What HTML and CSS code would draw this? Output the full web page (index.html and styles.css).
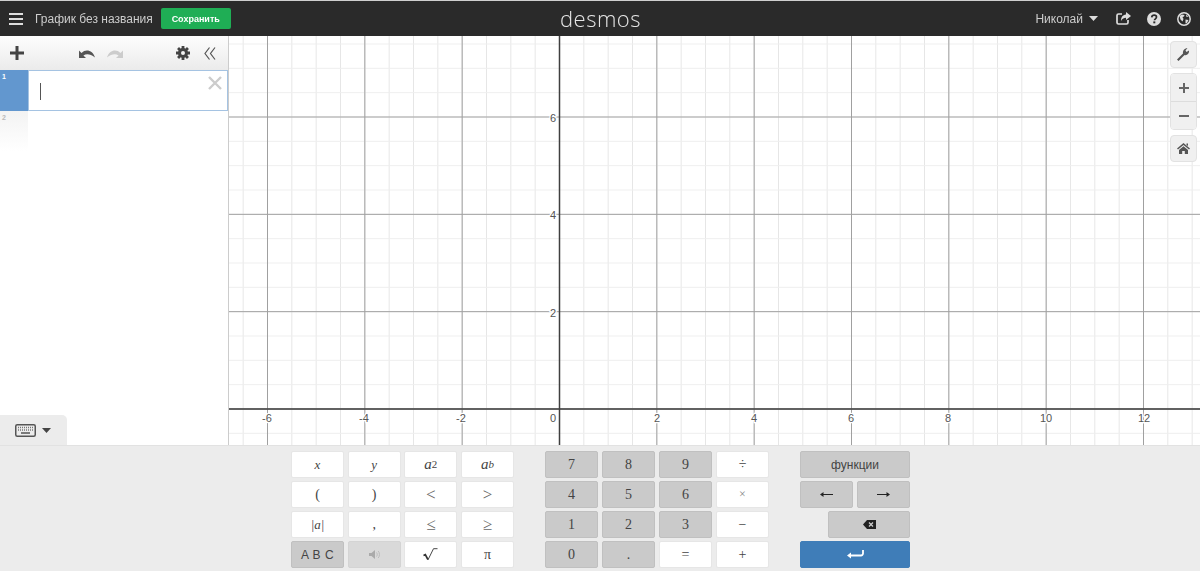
FILE: index.html
```html
<!DOCTYPE html>
<html lang="ru">
<head>
<meta charset="utf-8">
<title>Desmos</title>
<link rel="stylesheet" href="styles.css">
</head>
<body>
<div class="app">
  <header class="topbar">
    <div class="top-left">
      <svg class="ic-menu" width="14" height="12" viewBox="0 0 14 12"><path d="M0 0h14v2H0zM0 5h14v2H0zM0 10h14v2H0z" fill="#ddd"/></svg>
      <span class="title">График без названия</span>
      <button class="save">Сохранить</button>
    </div>
    <div class="logo">desmos</div>
    <div class="top-right">
      <span class="user">Николай</span>
      <svg class="caret" width="9" height="5" viewBox="0 0 9 5"><path d="M0 0h9L4.500 5z" fill="#ddd"/></svg>
      <svg class="ic-share" width="15" height="13" viewBox="0 0 15 13"><path d="M6 2H2.500A1.500 1.500 0 0 0 1 3.500v7A1.500 1.500 0 0 0 2.500 12h8a1.500 1.500 0 0 0 1.500-1.500V8" fill="none" stroke="#ddd" stroke-width="1.700"/><path d="M10 0l5 4-5 4V5.700C8 5.700 6.200 6.500 5 9c0-3.500 1.500-6 5-6.400z" fill="#ddd"/></svg>
      <svg class="ic-help" width="14" height="14" viewBox="0 0 14 14"><circle cx="7" cy="7" r="7" fill="#ddd"/><path d="M4.700 5.300C4.900 3.900 5.900 3.200 7.200 3.200c1.400 0 2.300.8 2.300 1.900 0 1.800-2 1.700-2 3.200" fill="none" stroke="#2a2a2a" stroke-width="1.700"/><rect x="6.300" y="9.400" width="2" height="1.900" fill="#2a2a2a"/></svg>
      <svg class="ic-globe" width="14" height="14" viewBox="0 0 14 14"><circle cx="7" cy="7" r="6.200" fill="none" stroke="#ddd" stroke-width="1.500"/><path d="M2.500 4L5 2.500l2.500.5-.5 1.500-1.500.5L6.500 7 5.500 9.500 3.500 7.500zM8.500 7.500l3 .5-1.500 3-1.500.5zM9 2.500l2.500 2-2 .5z" fill="#ddd"/></svg>
    </div>
  </header>

  <main class="workspace">
    <aside class="sidebar">
      <div class="toolbar">
        <svg class="ic-plus" width="14" height="14" viewBox="0 0 14 14"><path d="M5.500 0h3v5.500H14v3H8.500V14h-3V8.500H0v-3h5.500z" fill="#444"/></svg>
        <div class="undo-group">
          <svg width="16" height="11" viewBox="0 0 16 11"><path d="M0 2.500V10h7L4.400 7.500C7.500 5.500 11.500 6 16 9.500 14 2.500 7 .2 2.500 5z" fill="#555"/></svg>
          <svg width="16" height="11" viewBox="0 0 16 11"><path d="M16 2.500V10H9l2.600-2.500C8.500 5.500 4.500 6 0 9.500 2 2.500 9 .2 13.500 5z" fill="#ccc"/></svg>
        </div>
        <svg class="ic-gear" width="14" height="14" viewBox="0 0 14 14"><path d="M7 2a5 5 0 1 0 0 10A5 5 0 0 0 7 2zm0 3a2 2 0 1 1 0 4 2 2 0 0 1 0-4z" fill="#444" fill-rule="evenodd"/><path d="M7 0v14M0 7h14M2.050 2.050l9.900 9.900M11.950 2.050l-9.900 9.900" fill="none" stroke="#444" stroke-width="2.800" stroke-dasharray="3 8"/></svg>
        <svg class="ic-collapse" width="12" height="13" viewBox="0 0 12 13"><path d="M5.500.5L1 6.500l4.500 6M11 .5L6.500 6.500l4.500 6" fill="none" stroke="#555" stroke-width="1.200"/></svg>
      </div>
      <div class="expr active">
        <div class="gutter">1</div>
        <div class="field"><span class="cursor"></span>
          <svg class="ic-close" width="14" height="14" viewBox="0 0 14 14"><path d="M1 1l12 12M13 1L1 13" stroke="#ccc" stroke-width="2.400"/></svg>
        </div>
      </div>
      <div class="expr next">
        <div class="gutter">2</div>
      </div>
      <div class="kbd-tab">
        <svg width="21" height="13" viewBox="0 0 21 13"><rect x=".75" y=".75" width="19.500" height="11.500" rx="1.500" fill="none" stroke="#555" stroke-width="1.500"/><path d="M3 3.500h15M3 6h15" stroke="#777" stroke-width="1.300" stroke-dasharray="1 1"/><path d="M6 9h9" stroke="#555" stroke-width="1.500"/></svg>
        <svg width="9" height="5" viewBox="0 0 9 5"><path d="M0 0h9L4.500 5z" fill="#444"/></svg>
      </div>
    </aside>

    <section class="graph">
      <svg class="plane" width="971" height="409" viewBox="0 0 971 409">
        <defs>
          <pattern id="minor" width="24.333" height="24.333" patternUnits="userSpaceOnUse" patternTransform="translate(330 372.500)">
            <path d="M.5 0v24.333" stroke="#e6e6e6" stroke-width="1"/>
            <path d="M0 .5h24.333" stroke="#eee" stroke-width="1"/>
          </pattern>
          <pattern id="major" width="97.333" height="97.333" patternUnits="userSpaceOnUse" patternTransform="translate(330 372.500)">
            <path d="M.5 0v97.333" stroke="#a0a0a0" stroke-width="1"/>
            <path d="M0 .5h97.333" stroke="#a0a0a0" stroke-width="1"/>
          </pattern>
        </defs>
        <rect width="971" height="409" fill="url(#minor)"/>
        <rect width="971" height="409" fill="url(#major)"/>
        <path class="axis" d="M330.500 0v409M0 373h971"/>
        <g class="ticks">
          <text x="38" y="386">-6</text>
          <text x="135" y="386">-4</text>
          <text x="232" y="386">-2</text>
          <text x="324" y="386">0</text>
          <text x="428" y="386">2</text>
          <text x="525" y="386">4</text>
          <text x="622" y="386">6</text>
          <text x="719" y="386">8</text>
          <text x="817" y="386">10</text>
          <text x="915" y="386">12</text>
          <text x="324" y="281">2</text>
          <text x="324" y="183">4</text>
          <text x="324" y="86">6</text>
        </g>
      </svg>
      <div class="graph-tools">
        <div class="tool-btn single">
          <svg width="13" height="13" viewBox="0 0 13 13"><path d="M1.500 13L0 11.500 6 5.500C5.500 3 7 .5 10.500 0L8.500 2.500 9.500 4 12 2.500C12.500 5 10 8 7.500 7z" fill="#555"/></svg>
        </div>
        <div class="tool-stack">
          <div class="tool-btn"><svg width="10" height="10" viewBox="0 0 10 10"><path d="M4 0h2v4h4v2H6v4H4V6H0V4h4z" fill="#666"/></svg></div>
          <div class="tool-btn"><svg width="10" height="2" viewBox="0 0 10 2"><path d="M0 0h10v2H0z" fill="#666"/></svg></div>
        </div>
        <div class="tool-btn single">
          <svg width="13" height="11" viewBox="0 0 13 11"><path d="M6.500 0L13 5.500l-1 1-5.500-4.500L1 6.500l-1-1zM2 7l4.500-3.800L11 7v4H7.800V8H5.200v3H2zM9.500 .5h1.500v2.500L9.500 2z" fill="#555"/></svg>
        </div>
      </div>
    </section>
  </main>

  <footer class="keypad">
    <div class="keys">
      <button class="key math">x</button>
      <button class="key math">y</button>
      <button class="key math power">a<sup class="upright">2</sup></button>
      <button class="key math power">a<sup>b</sup></button>
      <button class="key serif">(</button>
      <button class="key serif">)</button>
      <button class="key serif big">&lt;</button>
      <button class="key serif big">&gt;</button>
      <button class="key math">|a|</button>
      <button class="key serif">,</button>
      <button class="key serif big">≤</button>
      <button class="key serif big">≥</button>
      <button class="key grey abc">A B C</button>
      <button class="key light-grey"><svg width="11" height="9" viewBox="0 0 11 9"><path d="M0 3h2.500L6 0v9L2.500 6H0z" fill="#aaa"/><path d="M7.500 2.500c1 1 1 3 0 4M9.200 1c1.700 2 1.700 5 0 7" fill="none" stroke="#bbb"/></svg></button>
      <button class="key"><svg width="15" height="13" viewBox="0 0 15 13"><path d="M.5 7.500l1.800-.8 2.600 4.800" fill="none" stroke="#333" stroke-width="1.700"/><path d="M4.900 12L10.500.7H14.500" fill="none" stroke="#333" stroke-width=".9"/></svg></button>
      <button class="key serif">π</button>
    </div>
    <div class="keys">
      <button class="key grey serif">7</button>
      <button class="key grey serif">8</button>
      <button class="key grey serif">9</button>
      <button class="key serif">÷</button>
      <button class="key grey serif">4</button>
      <button class="key grey serif">5</button>
      <button class="key grey serif">6</button>
      <button class="key serif small">×</button>
      <button class="key grey serif">1</button>
      <button class="key grey serif">2</button>
      <button class="key grey serif">3</button>
      <button class="key serif">−</button>
      <button class="key grey serif">0</button>
      <button class="key grey serif">.</button>
      <button class="key serif">=</button>
      <button class="key serif">+</button>
    </div>
    <div class="side-keys">
      <button class="key grey fn">функции</button>
      <button class="key grey half"><svg width="13" height="5" viewBox="0 0 13 5"><path d="M0 2.500L3.500 0v2h9.500v1H3.500v2z" fill="#222"/></svg></button>
      <button class="key grey half"><svg width="13" height="5" viewBox="0 0 13 5"><path d="M13 2.500L9.500 0v2H0v1h9.500v2z" fill="#222"/></svg></button>
      <button class="key grey back"><svg width="13" height="9" viewBox="0 0 13 9"><path d="M4 0h9v9H4L0 4.500z" fill="#222"/><path d="M6 2.500l4 4M10 2.500l-4 4" stroke="#ccc" stroke-width="1.300"/></svg></button>
      <button class="key enter"><svg width="17" height="9" viewBox="0 0 17 9"><path d="M16 0v3.500a2 2 0 0 1-2 2H3" fill="none" stroke="#fff" stroke-width="1.800"/><path d="M0 5.500L4 2.500v6z" fill="#fff"/></svg></button>
    </div>
  </footer>
</div>
</body>
</html>
```

FILE: styles.css
```css
* { box-sizing: border-box; }
html, body { margin: 0; height: 100%; overflow: hidden; }
body { font-family: "Liberation Sans", Arial, sans-serif; background: #fff; }
button { font-family: inherit; margin: 0; padding: 0; border: 0; }

.app { display: flex; flex-direction: column; width: 1200px; height: 571px; opacity: .999; }

.topbar {
  height: 36px;
  flex: none;
  display: flex;
  align-items: center;
  justify-content: space-between;
  border-top: 1px solid #cfcfcf;
  background: #2a2a2a;
  color: #ddd;
  position: relative;
}
.top-left { display: flex; align-items: center; padding-left: 9px; }
.title { margin-left: 12px; font-size: 12px; color: #ccc; }
.save {
  margin-left: 8px;
  width: 70px;
  height: 21px;
  border-radius: 2px;
  background: #1fae55;
  color: #fff;
  font-size: 9px;
  font-weight: bold;
}
.logo {
  position: absolute;
  left: 560px;
  top: 1px;
  font-family: "Open Sans", sans-serif;
  font-weight: 300;
  font-size: 22px;
  line-height: 32px;
  letter-spacing: .5px;
  color: #e6e6e6;
}
.top-right { display: flex; align-items: center; padding-right: 9px; }
.user { font-size: 12px; color: #ccc; }
.caret { margin-left: 6px; }
.ic-share { margin-left: 18px; }
.ic-help { margin-left: 16px; }
.ic-globe { margin-left: 16px; }

.workspace { flex: 1; display: flex; min-height: 0; }

.sidebar {
  position: relative;
  width: 229px;
  flex: none;
  border-right: 1px solid #ccc;
  background: #fff;
}
.toolbar {
  height: 34px;
  display: flex;
  align-items: center;
  background: linear-gradient(#fdfdfd, #ebebeb);
  padding-left: 10px;
}
.undo-group { display: flex; gap: 12px; margin-left: 55px; }
.ic-gear { margin-left: 53px; }
.ic-collapse { margin-left: 14px; }

.expr { display: flex; font-size: 7px; font-weight: bold; }
.expr.active { height: 41px; }
.expr.next { height: 40px; }
.gutter { width: 28px; padding: 3px 0 0 2px; flex: none; line-height: 8px; }
.active .gutter { background: #6297cf; color: #fff; }
.next .gutter { background: linear-gradient(#f3f3f3, #fff); color: #bbb; }
.field {
  flex: 1;
  position: relative;
  display: flex;
  align-items: center;
  border: 1px solid #a5c3e2;
  padding-left: 11px;
}
.cursor { width: 1px; height: 17px; background: #555; margin-top: 1px; }
.ic-close { position: absolute; top: 5px; right: 5px; }

.kbd-tab {
  position: absolute;
  left: 0;
  bottom: 0;
  width: 67px;
  height: 30px;
  display: flex;
  align-items: center;
  gap: 6px;
  padding-left: 15px;
  background: #ececec;
  border-radius: 0 5px 0 0;
}

.graph { flex: 1; position: relative; overflow: hidden; background: #fff; }
.plane { display: block; }
.axis { stroke: #3f3f3f; stroke-width: 1.500; fill: none; }
.ticks text {
  font-family: "Liberation Sans", Arial, sans-serif;
  font-size: 11px;
  fill: #555;
  text-anchor: middle;
  stroke: #fff;
  stroke-width: 2.500px;
  paint-order: stroke;
}

.graph-tools {
  position: absolute;
  top: 5px;
  right: 3px;
  display: flex;
  flex-direction: column;
  gap: 5px;
}
.tool-stack {
  display: flex;
  flex-direction: column;
  border-radius: 4px;
  border: 1px solid #e2e2e2;
  overflow: hidden;
}
.tool-btn {
  width: 27px;
  height: 27px;
  display: flex;
  align-items: center;
  justify-content: center;
  background: #f0f0f0;
}
.tool-stack .tool-btn { width: 25px; }
.tool-stack .tool-btn:first-child { border-bottom: 1px solid #ddd; height: 28px; }
.tool-btn.single { border-radius: 4px; border: 1px solid #e2e2e2; }

.keypad {
  height: 126px;
  flex: none;
  display: flex;
  justify-content: center;
  gap: 31px;
  padding: 5px 0 0 1px;
  background: #ececec;
  border-top: 1px solid #e2e2e2;
}
.keys {
  width: 223px;
  display: grid;
  grid-template-columns: repeat(4, 53px);
  grid-auto-rows: 27px;
  justify-content: space-between;
  row-gap: 3px;
}
.keys:nth-child(2) { width: 224px; }
.side-keys {
  width: 110px;
  display: grid;
  grid-template-columns: repeat(2, 53px);
  grid-auto-rows: 27px;
  justify-content: space-between;
  row-gap: 3px;
}
.key {
  display: flex;
  align-items: center;
  justify-content: center;
  background: #fff;
  border: 1px solid #e6e6e6;
  border-radius: 2px;
  color: #444;
  font-size: 12px;
}
.key.grey { background: #cacaca; border-color: #c0c0c0; }
.key.light-grey { background: #d9d9d9; border-color: #d4d4d4; }
.serif { font-family: "Liberation Serif", "Times New Roman", serif; font-size: 14px; }
.serif.big { font-size: 17px; color: #666; }
.serif.small { font-size: 12px; color: #888; }
.math { font-family: "Liberation Serif", "Times New Roman", serif; font-style: italic; font-size: 13px; }
.power { font-size: 15px; }
.math sup { font-size: 11px; line-height: 0; position: relative; top: -1px; vertical-align: super; }
.math sup.upright { font-style: normal; }
.abc { font-size: 12px; letter-spacing: .5px; }
.fn { grid-column: 1 / 3; font-size: 12px; color: #444; }
.back { grid-column: 1 / 3; width: 82px; justify-self: end; }
.enter { grid-column: 1 / 3; background: #3f7db8; border-color: #3f7db8; }
```
